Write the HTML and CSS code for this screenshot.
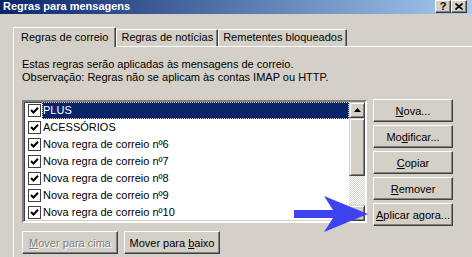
FILE: index.html
```html
<!DOCTYPE html>
<html lang="pt">
  <head>
    <meta charset="UTF-8" />
    <title>Regras para mensagens</title>
    <link rel="stylesheet" href="styles.css">
  </head>
  <body>
    <div class="window">
      <div class="titlebar">
        <span class="title">Regras para mensagens</span>
        <div class="caption-buttons">
          <span class="cap-btn help">?</span>
          <span class="cap-btn">
            <svg width="8" height="7" viewBox="0 0 8 7"><path d="M0.5 0.5l7 6M7.5 0.5l-7 6" stroke="#000" stroke-width="1.6"/></svg>
          </span>
        </div>
      </div>
      <div class="content">
        <div class="tabs">
          <div class="tab active">Regras de correio</div>
          <div class="tab">Regras de notícias</div>
          <div class="tab">Remetentes bloqueados</div>
        </div>
        <div class="panel">
          <p class="intro">Estas regras serão aplicadas às mensagens de correio.<br>Observação: Regras não se aplicam às contas IMAP ou HTTP.</p>
          <div class="rules-row">
            <div class="listbox">
              <ul class="rules">
                <li class="rule selected">
                  <svg class="check" viewBox="0 0 13 13"><rect x="0.5" y="0.5" width="12" height="12" fill="#fff" stroke="#404040"/><path d="M3 6l2.5 2.5L10 3.8" fill="none" stroke="#000" stroke-width="2"/></svg>
                  <span class="label">PLUS</span>
                </li>
                <li class="rule">
                  <svg class="check" viewBox="0 0 13 13"><rect x="0.5" y="0.5" width="12" height="12" fill="#fff" stroke="#404040"/><path d="M3 6l2.5 2.5L10 3.8" fill="none" stroke="#000" stroke-width="2"/></svg>
                  <span class="label">ACESSÓRIOS</span>
                </li>
                <li class="rule">
                  <svg class="check" viewBox="0 0 13 13"><rect x="0.5" y="0.5" width="12" height="12" fill="#fff" stroke="#404040"/><path d="M3 6l2.5 2.5L10 3.8" fill="none" stroke="#000" stroke-width="2"/></svg>
                  <span class="label">Nova regra de correio nº6</span>
                </li>
                <li class="rule">
                  <svg class="check" viewBox="0 0 13 13"><rect x="0.5" y="0.5" width="12" height="12" fill="#fff" stroke="#404040"/><path d="M3 6l2.5 2.5L10 3.8" fill="none" stroke="#000" stroke-width="2"/></svg>
                  <span class="label">Nova regra de correio nº7</span>
                </li>
                <li class="rule">
                  <svg class="check" viewBox="0 0 13 13"><rect x="0.5" y="0.5" width="12" height="12" fill="#fff" stroke="#404040"/><path d="M3 6l2.5 2.5L10 3.8" fill="none" stroke="#000" stroke-width="2"/></svg>
                  <span class="label">Nova regra de correio nº8</span>
                </li>
                <li class="rule">
                  <svg class="check" viewBox="0 0 13 13"><rect x="0.5" y="0.5" width="12" height="12" fill="#fff" stroke="#404040"/><path d="M3 6l2.5 2.5L10 3.8" fill="none" stroke="#000" stroke-width="2"/></svg>
                  <span class="label">Nova regra de correio nº9</span>
                </li>
                <li class="rule">
                  <svg class="check" viewBox="0 0 13 13"><rect x="0.5" y="0.5" width="12" height="12" fill="#fff" stroke="#404040"/><path d="M3 6l2.5 2.5L10 3.8" fill="none" stroke="#000" stroke-width="2"/></svg>
                  <span class="label">Nova regra de correio nº10</span>
                </li>
              </ul>
              <div class="scrollbar">
                <div class="sb-btn">
                  <svg width="7" height="4" viewBox="0 0 7 4"><path d="M0 4h7L3.5 0z" fill="#000"/></svg>
                </div>
                <div class="sb-thumb"></div>
                <div class="sb-track"></div>
                <div class="sb-btn">
                  <svg width="7" height="4" viewBox="0 0 7 4"><path d="M0 0h7L3.5 4z" fill="#000"/></svg>
                </div>
              </div>
            </div>
            <div class="actions">
              <button class="btn"><u>N</u>ova...</button>
              <button class="btn">Mo<u>d</u>ificar...</button>
              <button class="btn"><u>C</u>opiar</button>
              <button class="btn"><u>R</u>emover</button>
              <button class="btn"><u>A</u>plicar agora...</button>
            </div>
          </div>
          <div class="move-row">
            <button class="btn wide disabled"><u>M</u>over para cima</button>
            <button class="btn wide">Mover para <u>b</u>aixo</button>
          </div>
        </div>
      </div>
      <!-- the blue arrow pasted over the dialog -->
      <svg class="pointer" width="80" height="40" viewBox="0 0 80 40">
        <polygon points="4,16 43,16 34,2 78,20 34,38 43,24 4,24" fill="#3d43ef"/>
      </svg>
    </div>
  </body>
</html>
```

FILE: styles.css
```css
body {
  margin: 0;
  background-color: #d4d0c8;
  font-family: "Liberation Sans", Arial, sans-serif;
  font-size: 11px;
  color: #000;
}
.window {
  position: relative;
  width: 472px;
  height: 257px;
  overflow: hidden;
  background-color: #d4d0c8;
}
.titlebar {
  display: flex;
  justify-content: space-between;
  height: 14px;
  background: linear-gradient(to right, #0a246a, #a6caf0);
}
.title {
  padding-left: 3px;
  line-height: 13px;
  color: #fff;
  font-weight: bold;
  font-size: 11px;
}
.caption-buttons {
  display: flex;
  margin-right: 5px;
  height: 13px;
}
.cap-btn {
  display: flex;
  align-items: center;
  justify-content: center;
  width: 14px;
  height: 11px;
  background-color: #d4d0c8;
  border: 1px solid;
  border-color: #fff #404040 #404040 #fff;
  box-shadow: inset -1px -1px #808080;
  font-weight: bold;
  font-size: 11px;
  line-height: 11px;
}
.content {
  padding: 13px 0 0 13px;
}
.tabs {
  display: flex;
  align-items: flex-end;
  height: 19px;
}
.tab {
  padding: 1px 4px 2px;
  line-height: 13px;
  border: 1px solid;
  border-color: #fff #404040 transparent #fff;
  border-bottom: 0;
  box-shadow: inset -1px 0 #808080;
  white-space: nowrap;
}
.tab.active {
  position: relative;
  z-index: 1;
  padding: 3px 7px 3px;
  margin-bottom: -1px;
  background-color: #d4d0c8;
}
.panel {
  width: 449px;
  height: 240px;
  border: 1px solid;
  border-color: #fff #404040 #404040 #fff;
  box-shadow: inset -1px 0 #808080;
  padding: 11px 9px 0 8px;
}
.intro {
  margin: 0;
  line-height: 13px;
}
.rules-row {
  display: flex;
  gap: 6px;
  margin-top: 15px;
}
.listbox {
  display: flex;
  width: 341px;
  height: 119px;
  margin-top: 1px;
  background-color: #fff;
  border: 2px solid;
  border-color: #808080 #fff #fff #808080;
  box-shadow: inset 1px 1px #404040, inset -1px -1px #d4d0c8;
}
.rules {
  flex: 1;
  list-style: none;
  margin: 0;
  padding: 0;
}
.rule {
  display: flex;
  align-items: center;
  height: 17px;
}
.check {
  width: 13px;
  height: 13px;
  margin-left: 4px;
  flex-shrink: 0;
}
.label {
  flex: 1;
  height: 17px;
  line-height: 17px;
  margin-left: 1px;
  padding-left: 1px;
}
.rule.selected .label {
  background-color: #0a246a;
  color: #fff;
  outline: 1px dotted #d4d0c8;
  outline-offset: -1px;
}
.scrollbar {
  display: flex;
  flex-direction: column;
  width: 16px;
}
.sb-btn {
  display: flex;
  align-items: center;
  justify-content: center;
  box-sizing: border-box;
  height: 16px;
  background-color: #d4d0c8;
  border: 1px solid;
  border-color: #d4d0c8 #404040 #404040 #d4d0c8;
  box-shadow: inset 1px 1px #fff, inset -1px -1px #808080;
}
.sb-thumb {
  box-sizing: border-box;
  height: 58px;
  background-color: #d4d0c8;
  border: 1px solid;
  border-color: #d4d0c8 #404040 #404040 #d4d0c8;
  box-shadow: inset 1px 1px #fff, inset -1px -1px #808080;
}
.sb-track {
  flex: 1;
  background: repeating-conic-gradient(#fff 0 25%, #d4d0c8 0 50%) 0 0 / 2px 2px;
}
.actions {
  display: flex;
  flex-direction: column;
  gap: 3px;
}
.btn {
  width: 80px;
  height: 23px;
  padding: 0;
  background-color: #d4d0c8;
  border: 1px solid;
  border-color: #fff #404040 #404040 #fff;
  box-shadow: inset -1px -1px #808080;
  font-family: "Liberation Sans", Arial, sans-serif;
  font-size: 11px;
  color: #000;
}
.move-row {
  display: flex;
  gap: 6px;
  margin-top: 5px;
}
.btn.wide {
  width: 96px;
}
.btn.disabled {
  color: #808080;
  text-shadow: 1px 1px #fff;
}
.pointer {
  position: absolute;
  left: 290px;
  top: 194px;
}
```
